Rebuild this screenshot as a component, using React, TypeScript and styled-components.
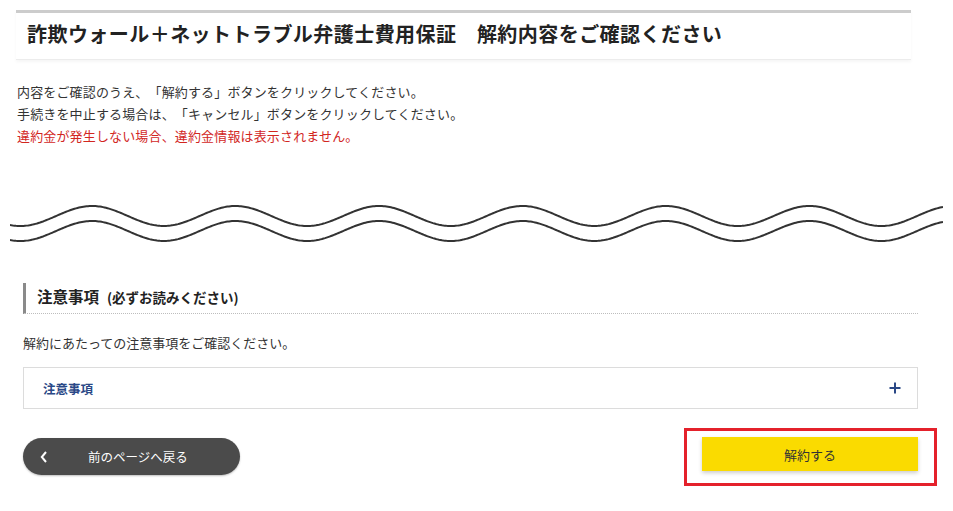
import React from 'react'
import styled, { createGlobalStyle } from 'styled-components'

const GlobalStyle = createGlobalStyle`
  body {
    margin: 0;
    background: #fff;
    color: #333;
    font-family: "Noto Sans CJK JP", "Noto Sans", sans-serif;
    text-spacing-trim: space-all;
  }
`

const Page = styled.div`
  width: 953px;
  padding-bottom: 30px;
`

const Header = styled.header`
  margin: 10px 0 0 16px;
  width: 895px;
  border-top: 3px solid #cccccc;
  border-bottom: 1px solid #ececec;
  box-shadow: 0 2px 3px rgba(0, 0, 0, 0.04);
  padding: 8px 0 12px 11px;
  box-sizing: border-box;
`

const Title = styled.h1`
  margin: 0;
  font-size: 20px;
  line-height: 26px;
  font-weight: 700;
  color: #222;
  letter-spacing: 0.45px;
`

const Notice = styled.div`
  margin: 21px 0 0 17px;
  font-size: 13px;
  line-height: 22px;
  letter-spacing: 0.15px;
`

const NoticeLine = styled.p<{ $alert?: boolean }>`
  margin: 0;
  color: ${(p) => (p.$alert ? '#d2271f' : '#333')};
`

const WaveBox = styled.div`
  margin: 55px 0 0 10px;
  height: 45px;
  svg {
    display: block;
  }
`

const Section = styled.section`
  margin: 36px 0 0 23px;
  width: 895px;
`

const SectionHead = styled.h2`
  margin: 0;
  padding: 3px 0 6px 11px;
  border-left: 3px solid #8a8a8a;
  border-bottom: 1px dotted #bdbdbd;
  font-size: 15.5px;
  line-height: 20px;
  font-weight: 700;
  color: #222;
  small {
    font-size: 13.5px;
    font-weight: 700;
    margin-left: 8px;
  }
`

const Lead = styled.p`
  margin: 19px 0 0;
  font-size: 13px;
  line-height: 20px;
`

const Accordion = styled.div`
  margin-top: 14px;
  height: 42px;
  box-sizing: border-box;
  border: 1px solid #dcdcdc;
  display: flex;
  align-items: center;
  justify-content: space-between;
  padding: 0 16px 0 19px;
  color: #2a4886;
  font-size: 12.5px;
  font-weight: 700;
`

const Actions = styled.div`
  margin-top: 28px;
  display: flex;
  justify-content: space-between;
  align-items: flex-start;
`

const BackButton = styled.button`
  margin-top: 1px;
  width: 217px;
  height: 37px;
  border: none;
  border-radius: 19px;
  background: #4b4b4b;
  box-shadow: 0 1px 2px rgba(0, 0, 0, 0.25);
  color: #fff;
  display: flex;
  align-items: center;
  padding: 0 12px 0 17px;
  font-family: inherit;
  font-size: 12.5px;
  span {
    flex: 1;
    text-align: center;
  }
`

const SubmitWrap = styled.div`
  position: relative;
`

const Highlight = styled.div`
  position: absolute;
  top: -9px;
  left: -18px;
  right: -19px;
  bottom: -15px;
  border: 3px solid #e4212b;
  pointer-events: none;
`

const SubmitButton = styled.button`
  display: block;
  width: 216px;
  height: 34px;
  border: none;
  background: #fadb00;
  box-shadow: 0 2px 4px rgba(0, 0, 0, 0.2);
  color: #333;
  font-family: inherit;
  font-size: 13px;
`

const Wave = () => {
  const width = 933
  const period = 143.5
  const peak = 82
  const line = (c: number) => {
    const pts: string[] = []
    for (let x = 0; x <= width; x += 1.5) {
      const y = c - 10 * Math.cos((2 * Math.PI * (x - peak)) / period)
      pts.push(`${x.toFixed(1)},${y.toFixed(2)}`)
    }
    return 'M' + pts.join(' L')
  }
  return (
    <svg width={width} height={45} viewBox={`0 0 ${width} 45`}>
      <path d={line(14)} fill="none" stroke="#333" strokeWidth={2} />
      <path d={line(29)} fill="none" stroke="#333" strokeWidth={2} />
    </svg>
  )
}

const App = () => {
  return (
    <Page>
      <GlobalStyle />
      <Header>
        <Title>詐欺ウォール＋ネットトラブル弁護士費用保証　解約内容をご確認ください</Title>
      </Header>
      <Notice>
        <NoticeLine>内容をご確認のうえ、「解約する」ボタンをクリックしてください。</NoticeLine>
        <NoticeLine>手続きを中止する場合は、「キャンセル」ボタンをクリックしてください。</NoticeLine>
        <NoticeLine $alert>違約金が発生しない場合、違約金情報は表示されません。</NoticeLine>
      </Notice>
      <WaveBox>
        <Wave />
      </WaveBox>
      <Section>
        <SectionHead>
          注意事項<small>(必ずお読みください)</small>
        </SectionHead>
        <Lead>解約にあたっての注意事項をご確認ください。</Lead>
        <Accordion>
          注意事項
          <svg width="12" height="12" viewBox="0 0 12 12">
            <path d="M6 0.5V11.5M0.5 6H11.5" stroke="#2a4886" strokeWidth="2" />
          </svg>
        </Accordion>
        <Actions>
          <BackButton>
            <svg width="8" height="12" viewBox="0 0 8 12">
              <path d="M6 1L1.8 6L6 11" fill="none" stroke="#fff" strokeWidth="2" />
            </svg>
            <span>前のページへ戻る</span>
          </BackButton>
          <SubmitWrap>
            <SubmitButton>解約する</SubmitButton>
            <Highlight />
          </SubmitWrap>
        </Actions>
      </Section>
    </Page>
  )
}

export default App
